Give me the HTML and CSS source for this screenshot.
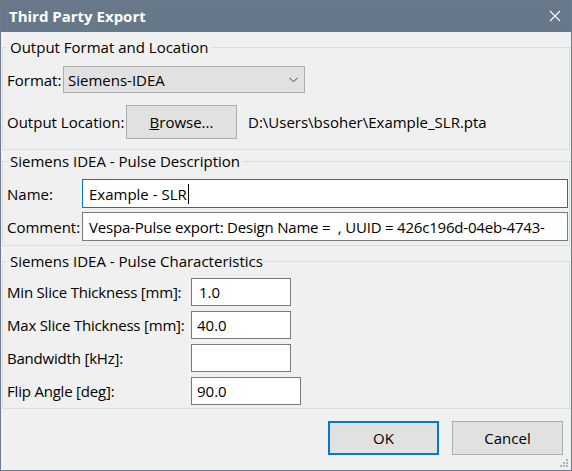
FILE: index.html
```html
<!DOCTYPE html>
<html lang="en">
<head>
<meta charset="utf-8">
<title>Third Party Export</title>
<link rel="stylesheet" href="styles.css">
</head>
<body>
<div class="window">
  <div class="titlebar">
    <span class="title">Third Party Export</span>
    <svg class="close" width="12" height="12" viewBox="0 0 12 12"><path d="M1 1 L11 11 M11 1 L1 11" stroke="#ffffff" stroke-width="1.1" fill="none"/></svg>
  </div>
  <div class="content">
    <fieldset class="group g1">
      <legend>Output Format and Location</legend>
      <div class="row r-format">
        <span class="lbl lbl-format">Format:</span>
        <div class="select">
          <span>Siemens-IDEA</span>
          <svg width="9" height="6" viewBox="0 0 9 6"><path d="M0.5 0.8 L4.5 4.8 L8.5 0.8" stroke="#404040" stroke-width="1" fill="none"/></svg>
        </div>
      </div>
      <div class="row r-loc">
        <span class="lbl lbl-loc">Output Location:</span>
        <div class="btn browse"><u>B</u>rowse...</div>
        <span class="path">D:\Users\bsoher\Example_SLR.pta</span>
      </div>
    </fieldset>

    <fieldset class="group g2">
      <legend>Siemens IDEA - Pulse Description</legend>
      <div class="row r-text">
        <span class="lbl lbl-desc">Name:</span>
        <div class="field wide focused"><span>Example - SLR</span><span class="caret"></span></div>
      </div>
      <div class="row r-text r-gap">
        <span class="lbl lbl-desc">Comment:</span>
        <div class="field wide"><span class="comment">Vespa-Pulse export: Design Name =&nbsp; , UUID = 426c196d-04eb-4743-</span></div>
      </div>
    </fieldset>

    <fieldset class="group g3">
      <legend>Siemens IDEA - Pulse Characteristics</legend>
      <div class="grid">
        <span class="lbl">Min Slice Thickness [mm]:</span>
        <div class="field num"><span class="v1">1.0</span></div>
        <span class="lbl">Max Slice Thickness [mm]:</span>
        <div class="field num"><span>40.0</span></div>
        <span class="lbl">Bandwidth [kHz]:</span>
        <div class="field num"></div>
        <span class="lbl">Flip Angle [deg]:</span>
        <div class="field num numwide"><span>90.0</span></div>
      </div>
    </fieldset>

    <div class="buttons">
      <div class="btn ok">OK</div>
      <div class="btn cancel">Cancel</div>
    </div>
    <svg class="grip" width="9" height="9" viewBox="0 0 9 9">
      <rect x="6" y="0" width="2" height="2" fill="#b4b4b4"/>
      <rect x="3" y="3" width="2" height="2" fill="#b4b4b4"/>
      <rect x="6" y="3" width="2" height="2" fill="#b4b4b4"/>
      <rect x="0" y="6" width="2" height="2" fill="#b4b4b4"/>
      <rect x="3" y="6" width="2" height="2" fill="#b4b4b4"/>
      <rect x="6" y="6" width="2" height="2" fill="#b4b4b4"/>
    </svg>
  </div>
</div>
</body>
</html>
```
FILE: styles.css
```css
* { box-sizing: border-box; }
html, body {
  margin: 0;
  padding: 0;
  width: 572px;
  height: 471px;
  overflow: hidden;
  background: #f0f0f0;
}
body {
  font-family: "Open Sans", "Noto Sans", "Liberation Sans", sans-serif;
  font-size: 15px;
  color: #000;
}
.window {
  width: 572px;
  height: 471px;
  border: 1px solid #6c7b8e;
  display: flex;
  flex-direction: column;
  background: #f0f0f0;
}
.titlebar {
  height: 31px;
  flex: none;
  background: #67788b;
  display: flex;
  align-items: center;
  justify-content: space-between;
  padding: 0 10px 1px 8px;
}
.title {
  color: #fff;
  font-weight: 700;
  font-size: 15px;
}
.close { display: block; }
.content {
  flex: 1;
  position: relative;
  display: flex;
  flex-direction: column;
}
.group {
  margin: 0 1px;
  border: 1px solid #dcdcdc;
  padding: 0 1px 0 4px;
  min-width: 0;
}
.group legend {
  padding: 0 2px 0 3px;
  line-height: 20px;
  font-size: 15px;
}
.g1 { margin-top: 5px; padding-top: 9px; padding-bottom: 10px; }
.g2 { margin-top: 1px; padding-top: 8px; padding-bottom: 4px; }
.g3 { margin-top: 5px; padding-top: 7px; padding-bottom: 3px; }

.row { display: flex; align-items: center; }
.lbl { white-space: nowrap; }
.lbl-format { width: 56px; flex: none; }
.lbl-loc { width: 119px; flex: none; }
.lbl-desc { width: 75px; flex: none; }
.r-format { height: 27px; }
.r-loc { margin-top: 12px; height: 34px; }
.r-gap { margin-top: 4px; }

.select {
  width: 242px;
  height: 27px;
  background: #e1e1e1;
  border: 1px solid #adadad;
  display: flex;
  align-items: center;
  justify-content: space-between;
  padding: 0 6px 0 4px;
}
.btn {
  background: #e1e1e1;
  border: 1px solid #adadad;
  display: flex;
  align-items: center;
  justify-content: center;
  flex: none;
}
.browse { width: 111px; height: 34px; }
.path { margin-left: 11px; white-space: nowrap; }

.field {
  background: #fff;
  border: 1px solid #7a7a7a;
  display: flex;
  align-items: center;
  padding: 0 6px;
  white-space: nowrap;
  overflow: hidden;
}
.wide { flex: 1; height: 29px; min-width: 0; }
.comment { letter-spacing: -0.2px; }
.focused { border-color: #0078d7; }
.caret {
  display: inline-block;
  width: 1px;
  height: 20px;
  background: #000;
  margin-left: 1px;
}
.grid {
  display: grid;
  grid-template-columns: 184px auto;
  row-gap: 5px;
  align-items: center;
  justify-items: start;
}
.grid .lbl { letter-spacing: -0.2px; }
.num { width: 100px; height: 28px; padding-left: 5px; }
.numwide { width: 110px; }
.v1 { padding-left: 2px; }

.buttons {
  display: flex;
  justify-content: flex-end;
  gap: 13px;
  margin-top: 12px;
  padding-right: 8px;
}
.buttons .btn { width: 111px; height: 34px; }
.ok { border: 2px solid #0078d7; }
.grip {
  position: absolute;
  right: 2px;
  bottom: 2px;
}
```
